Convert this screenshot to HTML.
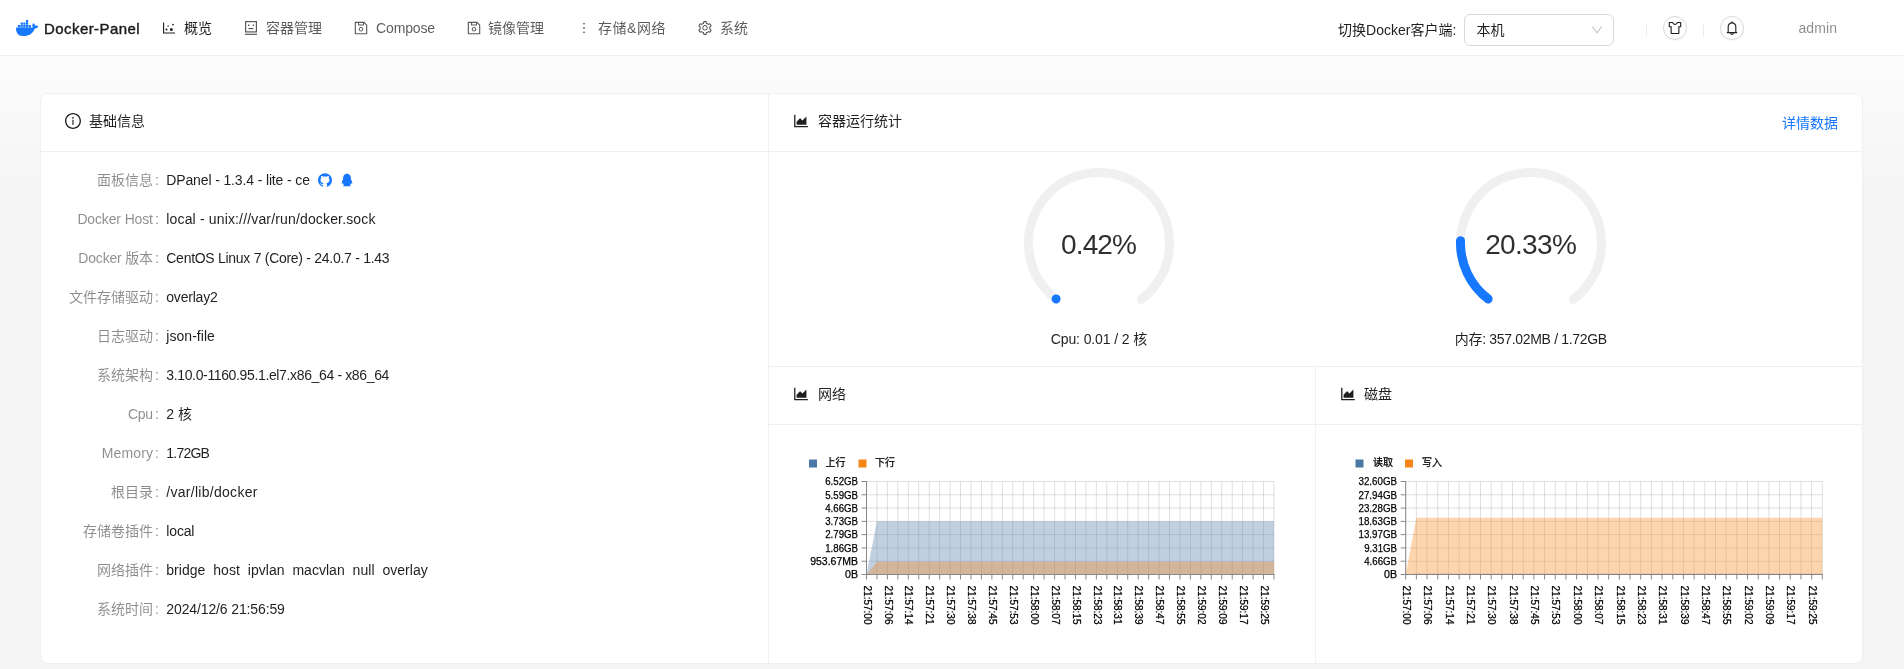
<!DOCTYPE html>
<html lang="zh-CN"><head><meta charset="utf-8"><title>Docker-Panel</title>
<style>
html,body{margin:0;padding:0}
body{width:1904px;height:669px;overflow:hidden;position:relative;background:linear-gradient(#ffffff,#f5f5f5 28%);font-family:"Liberation Sans","Noto Sans CJK SC",sans-serif;font-size:14px}
.hdr{position:absolute;left:0;top:0;width:1903px;height:55px;background:#fff;border-bottom:1px solid #f0f0f0}
.card{position:absolute;left:40px;top:93px;width:1821px;height:569px;background:#fff;border:1px solid #f0f0f0;border-radius:8px;box-sizing:content-box}
.hl{position:absolute;background:#f0f0f0;height:1px}
.vl{position:absolute;background:#f0f0f0;width:1px}
.sel{position:absolute;left:1464px;top:14px;width:148px;height:30px;border:1px solid #d9d9d9;border-radius:6px;background:#fff}
.circ{position:absolute;top:16px;width:22px;height:22px;border:1px solid #d9d9d9;border-radius:50%;background:#fff;box-shadow:0 2px 0 rgba(0,0,0,0.02)}
.dv{position:absolute;top:24px;width:1px;height:13px;background:#eeeeee}
svg text{font-family:"Liberation Sans","Noto Sans CJK SC",sans-serif;stroke:#000;stroke-width:0.25px}
</style></head><body>
<div class="hdr"></div>
<div class="card"></div>
<div class="hl" style="left:41px;top:151px;width:1821px"></div>
<div class="vl" style="left:768px;top:94px;height:569px"></div>
<div class="hl" style="left:769px;top:366px;width:1093px"></div>
<div class="hl" style="left:769px;top:424px;width:1093px"></div>
<div class="vl" style="left:1315px;top:367px;height:296px"></div>
<div class="sel"></div>
<div class="dv" style="left:1646px"></div><div class="dv" style="left:1703px"></div>
<div class="circ" style="left:1663px"></div><div class="circ" style="left:1720px"></div>
<svg style="position:absolute;left:16.400px;top:16.900px" width="22" height="22" viewBox="0 0 24 24" fill="#1677ff"><path d="M13.98 11.08h2.12a.19.19 0 0 0 .19-.19V9.01a.19.19 0 0 0-.19-.19h-2.12a.19.19 0 0 0-.19.19v1.88c0 .1.09.19.19.19m-2.95-5.43h2.12a.19.19 0 0 0 .18-.19V3.57a.19.19 0 0 0-.18-.18h-2.12a.18.18 0 0 0-.19.18v1.9c0 .1.09.18.19.18m0 2.71h2.12a.19.19 0 0 0 .18-.18V6.29a.19.19 0 0 0-.18-.18h-2.12a.18.18 0 0 0-.19.18v1.89c0 .1.09.18.19.18m-2.93 0h2.12a.19.19 0 0 0 .18-.18V6.29a.18.18 0 0 0-.18-.18H8.1a.18.18 0 0 0-.18.18v1.89c0 .1.08.18.18.18m-2.96 0h2.11a.19.19 0 0 0 .19-.18V6.29a.18.18 0 0 0-.19-.18H5.140a.19.19 0 0 0-.19.18v1.89c0 .1.080.18.190.18m5.890 2.720h2.120a.19.19 0 0 0 .18-.19V9.010a.19.19 0 0 0-.18-.19h-2.120a.18.18 0 0 0-.19.180v1.890c0 .1.090.190.190.190m-2.930 0h2.120a.18.18 0 0 0 .18-.19V9.010a.18.18 0 0 0-.18-.19H8.100a.18.18 0 0 0-.18.180v1.890c0 .1.080.190.180.190m-2.960 0h2.110a.18.18 0 0 0 .19-.19V9.010a.18.18 0 0 0-.18-.19H5.140a.19.19 0 0 0-.19.190v1.880c0 .1.080.190.190.190m-2.920 0h2.120a.18.18 0 0 0 .18-.19V9.010a.18.18 0 0 0-.18-.19H2.220a.18.18 0 0 0-.19.180v1.890c0 .1.080.190.190.190m21.540-1.190c-.06-.05-.67-.51-1.950-.51-.34 0-.68.030-1.010.090-.25-1.700-1.650-2.530-1.720-2.560l-.34-.2-.23.330c-.28.440-.49.920-.61 1.430-.23.970-.09 1.880.4 2.660-.59.330-1.550.41-1.740.42H.75a.75.75 0 0 0-.75.750c-.03 1.400.21 2.790.69 4.110.55 1.440 1.370 2.510 2.440 3.160 1.190.73 3.140 1.150 5.340 1.150 1 0 1.990-.09 2.970-.27a12.300 12.300 0 0 0 3.880-1.410c1-.58 1.890-1.310 2.650-2.170 1.270-1.440 2.030-3.040 2.590-4.460h.23c1.400 0 2.260-.56 2.730-1.030.32-.3.560-.66.730-1.070l.1-.29z"/></svg><svg style="position:absolute;left:162px;top:21px" width="14" height="14" viewBox="64 64 896 896" fill="rgba(0,0,0,0.88)"><path d="M888 792H200V168c0-4.400-3.600-8-8-8h-56c-4.400 0-8 3.600-8 8v688c0 4.400 3.600 8 8 8h752c4.400 0 8-3.600 8-8v-56c0-4.400-3.600-8-8-8zM288 604a64 64 0 10128 0 64 64 0 10-128 0zm118-224a48 48 0 1096 0 48 48 0 10-96 0zm158 228a96 96 0 10192 0 96 96 0 10-192 0zm148-314a56 56 0 10112 0 56 56 0 10-112 0z"/></svg><svg style="position:absolute;left:243px;top:19px" width="16" height="18" viewBox="0 0 16 18" fill="none" stroke="rgba(0,0,0,0.65)" stroke-width="1.2"><rect x="2.600" y="2.600" width="10.800" height="10.300"/><path d="M2 15.3H14"/><path d="M5.500 9.600H10.500"/><path d="M5.700 5.400V7 M10.300 5.400V7" stroke-width="1.300"/></svg><svg style="position:absolute;left:354.2px;top:21px" width="14" height="14" viewBox="64 64 896 896" fill="rgba(0,0,0,0.65)"><path d="M893.300 293.300L730.700 130.700c-7.500-7.500-16.700-13-26.700-16V112H144c-17.700 0-32 14.300-32 32v736c0 17.700 14.300 32 32 32h736c17.700 0 32-14.300 32-32V338.500c0-17-6.700-33.200-18.700-45.200zM384 184h256v104H384V184zm456 656H184V184h136v136c0 17.700 14.300 32 32 32h320c17.700 0 32-14.300 32-32V205.800l136 136V840zM512 442c-79.500 0-144 64.500-144 144s64.500 144 144 144 144-64.500 144-144-64.500-144-144-144zm0 224c-44.200 0-80-35.800-80-80s35.800-80 80-80 80 35.800 80 80-35.800 80-80 80z"/></svg><svg style="position:absolute;left:467px;top:21px" width="14" height="14" viewBox="64 64 896 896" fill="rgba(0,0,0,0.65)"><path d="M893.300 293.300L730.700 130.700c-7.500-7.500-16.700-13-26.700-16V112H144c-17.700 0-32 14.300-32 32v736c0 17.700 14.300 32 32 32h736c17.700 0 32-14.300 32-32V338.500c0-17-6.700-33.200-18.700-45.200zM384 184h256v104H384V184zm456 656H184V184h136v136c0 17.700 14.300 32 32 32h320c17.700 0 32-14.300 32-32V205.800l136 136V840zM512 442c-79.500 0-144 64.500-144 144s64.500 144 144 144 144-64.500 144-144-64.500-144-144-144zm0 224c-44.200 0-80-35.800-80-80s35.800-80 80-80 80 35.800 80 80-35.800 80-80 80z"/></svg><svg style="position:absolute;left:576.8px;top:21px" width="14" height="14" viewBox="64 64 896 896" fill="rgba(0,0,0,0.65)"><path d="M456 231a56 56 0 10112 0 56 56 0 10-112 0zm0 280a56 56 0 10112 0 56 56 0 10-112 0zm0 280a56 56 0 10112 0 56 56 0 10-112 0z"/></svg><svg style="position:absolute;left:698px;top:21px" width="14" height="14" viewBox="64 64 896 896" fill="rgba(0,0,0,0.65)"><path d="M924.800 625.700l-65.500-56c3.100-19 4.700-38.400 4.700-57.800s-1.600-38.800-4.700-57.800l65.500-56a32.030 32.030 0 009.300-35.200l-.9-2.600a442.090 442.090 0 00-79.700-137.900l-1.800-2.100a32.120 32.120 0 00-35.100-9.500l-81.300 28.900c-30-24.600-63.500-44-99.700-57.600l-15.700-85a32.050 32.050 0 00-25.800-25.700l-2.700-.5c-52.100-9.400-106.900-9.400-159 0l-2.700.5a32.050 32.050 0 00-25.800 25.700l-15.800 85.400a351.860 351.860 0 00-99 57.400l-81.900-29.100a32 32 0 00-35.100 9.500l-1.800 2.100a446.020 446.020 0 00-79.700 137.900l-.9 2.600c-4.500 12.500-.8 26.500 9.300 35.200l66.300 56.600c-3.100 18.800-4.600 38-4.600 57.100 0 19.200 1.500 38.400 4.600 57.100L99 625.500a32.030 32.030 0 00-9.300 35.200l.9 2.600c18.100 50.400 44.900 96.900 79.700 137.900l1.800 2.100a32.120 32.120 0 0035.100 9.500l81.900-29.100c29.800 24.500 63.100 43.900 99 57.400l15.800 85.400a32.050 32.050 0 0025.800 25.700l2.700.5a449.400 449.400 0 00159 0l2.700-.5a32.050 32.050 0 0025.800-25.700l15.700-85a350 350 0 0099.700-57.600l81.300 28.900a32 32 0 0035.100-9.500l1.800-2.100c34.800-41.100 61.600-87.500 79.700-137.900l.9-2.600c4.500-12.300.8-26.300-9.300-35zM788.300 465.900c2.500 15.100 3.800 30.600 3.800 46.100s-1.300 31-3.800 46.100l-6.600 40.100 74.700 63.900a370.030 370.030 0 01-42.600 73.600L721 702.800l-31.400 25.800c-23.900 19.600-50.500 35-79.300 45.800l-38.100 14.300-17.900 97a377.500 377.500 0 01-85 0l-17.900-97.200-37.800-14.500c-28.500-10.800-55-26.200-78.700-45.700l-31.400-25.900-93.400 33.200c-17-22.900-31.200-47.600-42.600-73.600l75.500-64.500-6.500-40c-2.400-14.900-3.700-30.300-3.700-45.500 0-15.300 1.200-30.600 3.700-45.500l6.500-40-75.500-64.500c11.300-26.100 25.600-50.700 42.600-73.600l93.400 33.200 31.400-25.900c23.700-19.500 50.200-34.900 78.700-45.700l37.900-14.300 17.900-97.200c28.100-3.200 56.800-3.200 85 0l17.900 97 38.100 14.300c28.700 10.800 55.400 26.200 79.300 45.800l31.400 25.800 92.800-32.900c17 22.900 31.200 47.600 42.600 73.600L781.800 426l6.500 39.900zM512 326c-97.200 0-176 78.800-176 176s78.800 176 176 176 176-78.800 176-176-78.800-176-176-176zm79.200 255.200A111.600 111.600 0 01512 614c-29.900 0-58-11.700-79.200-32.800A111.600 111.600 0 01400 502c0-29.900 11.700-58 32.800-79.200C454 401.600 482.100 390 512 390c29.900 0 58 11.600 79.200 32.800A111.600 111.600 0 01624 502c0 29.900-11.700 58-32.800 79.200z"/></svg><svg style="position:absolute;left:1591px;top:24px" width="12" height="12" viewBox="64 64 896 896" fill="rgba(0,0,0,0.25)"><path d="M884 256h-75c-5.100 0-9.900 2.500-12.900 6.600L512 654.200 227.900 262.600c-3-4.100-7.800-6.600-12.900-6.600h-75c-6.500 0-10.300 7.400-6.500 12.700l352.600 486.100c12.800 17.600 39 17.600 51.700 0l352.600-486.100c3.900-5.300.1-12.700-6.400-12.700z"/></svg><svg style="position:absolute;left:1668px;top:21px" width="14" height="14" viewBox="64 64 896 896" fill="rgba(0,0,0,0.88)"><path d="M870 126H663.800c-17.400 0-32.900 11.900-37 29.300C614.300 208.100 567 246 512 246s-102.300-37.900-114.800-90.700a37.930 37.930 0 00-37-29.300H154a44 44 0 00-44 44v252a44 44 0 0044 44h75v388a44 44 0 0044 44h478a44 44 0 0044-44V466h75a44 44 0 0044-44V170a44 44 0 00-44-44zm-28 268H723v432H301V394H182V198h153.300c28.200 71.200 97.500 120 176.700 120s148.500-48.800 176.700-120H842v196z"/></svg><svg style="position:absolute;left:1725px;top:21px" width="14" height="14" viewBox="64 64 896 896" fill="rgba(0,0,0,0.88)"><path d="M816 768h-24V428c0-141.100-104.300-257.700-240-277.100V112c0-22.100-17.900-40-40-40s-40 17.900-40 40v38.900c-135.700 19.400-240 136-240 277.100v340h-24c-17.700 0-32 14.300-32 32v32c0 4.400 3.600 8 8 8h216c0 61.800 50.200 112 112 112s112-50.200 112-112h216c4.400 0 8-3.600 8-8v-32c0-17.700-14.300-32-32-32zM512 888c-26.500 0-48-21.500-48-48h96c0 26.500-21.500 48-48 48zM304 768V428c0-55.600 21.600-107.800 60.900-147.100S456.400 220 512 220c55.600 0 107.800 21.600 147.100 60.900S720 372.400 720 428v340H304z"/></svg><svg style="position:absolute;left:65px;top:113px" width="16" height="16" viewBox="64 64 896 896" fill="rgba(0,0,0,0.88)"><path d="M512 64C264.6 64 64 264.6 64 512s200.6 448 448 448 448-200.6 448-448S759.4 64 512 64zm0 820c-205.4 0-372-166.6-372-372s166.6-372 372-372 372 166.6 372 372-166.6 372-372 372z"/><path d="M464 336a48 48 0 1096 0 48 48 0 10-96 0zm72 112h-48c-4.400 0-8 3.600-8 8v272c0 4.400 3.600 8 8 8h48c4.400 0 8-3.600 8-8V456c0-4.400-3.600-8-8-8z"/></svg><svg style="position:absolute;left:793px;top:113px" width="16" height="16" viewBox="64 64 896 896" fill="rgba(0,0,0,0.88)"><path d="M888 792H200V168c0-4.400-3.600-8-8-8h-56c-4.400 0-8 3.600-8 8v688c0 4.400 3.600 8 8 8h752c4.400 0 8-3.600 8-8v-56c0-4.400-3.600-8-8-8zm-616-64h536c4.400 0 8-3.600 8-8V284c0-7.200-8.700-10.700-13.700-5.700L592 488.600l-125.400-124a8.030 8.030 0 00-11.300 0l-189 189.600a7.870 7.870 0 00-2.300 5.600V720c0 4.400 3.600 8 8 8z"/></svg><svg style="position:absolute;left:793px;top:386px" width="16" height="16" viewBox="64 64 896 896" fill="rgba(0,0,0,0.88)"><path d="M888 792H200V168c0-4.400-3.600-8-8-8h-56c-4.400 0-8 3.600-8 8v688c0 4.400 3.600 8 8 8h752c4.400 0 8-3.600 8-8v-56c0-4.400-3.600-8-8-8zm-616-64h536c4.400 0 8-3.600 8-8V284c0-7.200-8.700-10.700-13.700-5.700L592 488.600l-125.400-124a8.030 8.030 0 00-11.300 0l-189 189.600a7.870 7.870 0 00-2.300 5.600V720c0 4.400 3.600 8 8 8z"/></svg><svg style="position:absolute;left:1340px;top:386px" width="16" height="16" viewBox="64 64 896 896" fill="rgba(0,0,0,0.88)"><path d="M888 792H200V168c0-4.400-3.600-8-8-8h-56c-4.400 0-8 3.600-8 8v688c0 4.400 3.600 8 8 8h752c4.400 0 8-3.600 8-8v-56c0-4.400-3.600-8-8-8zm-616-64h536c4.400 0 8-3.600 8-8V284c0-7.200-8.700-10.700-13.700-5.700L592 488.600l-125.400-124a8.030 8.030 0 00-11.300 0l-189 189.600a7.870 7.870 0 00-2.300 5.600V720c0 4.400 3.600 8 8 8z"/></svg><svg style="position:absolute;left:318px;top:173px" width="14" height="14" viewBox="64 64 896 896" fill="#1677ff"><path d="M511.600 76.300C264.300 76.200 64 276.400 64 523.500 64 718.900 189.300 885 363.800 946c23.500 5.900 19.900-10.800 19.900-22.200v-77.500c-135.700 15.900-141.200-73.900-150.300-88.900C215 726 171.500 718 184.500 703c30.900-15.900 62.400 4 98.900 57.900 26.400 39.100 77.900 32.500 104 26 5.700-23.500 17.900-44.500 34.700-60.800-140.600-25.200-199.200-111-199.200-213 0-49.500 16.300-95 48.300-131.700-20.400-60.500 1.900-112.300 4.900-120 58.100-5.200 118.500 41.600 123.200 45.300 33-8.900 70.700-13.600 112.900-13.600 42.400 0 80.200 4.900 113.500 13.900 11.300-8.600 67.300-48.800 121.300-43.900 2.900 7.700 24.700 58.300 5.500 118 32.400 36.800 48.900 82.700 48.900 132.300 0 102.200-59 188.100-200 212.900a127.500 127.500 0 0138.100 91v112.500c.8 9 0 17.900 15 17.900 177.100-59.700 304.600-227 304.600-424.100 0-247.200-200.400-447.300-447.500-447.300z"/></svg><svg style="position:absolute;left:340px;top:173px" width="14" height="14" viewBox="64 64 896 896" fill="#1677ff"><path d="M824.800 613.200c-16-51.400-34.400-94.600-62.700-165.300C766.500 262.200 689.300 112 511.500 112 331.700 112 256.200 265.200 261 447.900c-28.400 70.800-46.700 113.700-62.700 165.300-34 109.500-23 154.800-14.600 155.800 18 2.200 70.100-82.400 70.100-82.400 0 49 25.200 112.900 79.800 159-26.400 8.100-85.700 29.900-71.600 53.800 11.400 19.300 196.200 12.300 249.500 6.300 53.300 6 238.100 13 249.500-6.300 14.100-23.800-45.300-45.700-71.600-53.800 54.600-46.200 79.800-110.100 79.800-159 0 0 52.100 84.600 70.100 82.400 8.500-1.100 19.500-46.400-14.500-155.800z"/></svg>
<svg style="position:absolute;left:1024px;top:168px" width="150" height="150" viewBox="0 0 150 150"><circle cx="75" cy="75" r="70.5" fill="none" stroke="#f0f0f0" stroke-width="9" stroke-linecap="round" stroke-dasharray="350.68 442.96" transform="rotate(127.5 75 75)"/><circle cx="75" cy="75" r="70.5" fill="none" stroke="#1677ff" stroke-width="9" stroke-linecap="round" stroke-dasharray="0.01 442.96" transform="rotate(127.5 75 75)"/></svg>
<svg style="position:absolute;left:1456px;top:168px" width="150" height="150" viewBox="0 0 150 150"><circle cx="75" cy="75" r="70.5" fill="none" stroke="#f0f0f0" stroke-width="9" stroke-linecap="round" stroke-dasharray="350.68 442.96" transform="rotate(127.5 75 75)"/><circle cx="75" cy="75" r="70.5" fill="none" stroke="#1677ff" stroke-width="9" stroke-linecap="round" stroke-dasharray="66.79 442.96" transform="rotate(127.5 75 75)"/></svg>
<svg style="position:absolute;left:0;top:0;will-change:transform" width="1904" height="669" viewBox="0 0 1904 669"><rect x="809" y="459.5" width="8" height="8" fill="#4c78a8"/><rect x="858.5" y="459.5" width="8" height="8" fill="#f58518"/><text x="825.5" y="466.3" font-size="10" fill="#000">上行</text><text x="875" y="466.3" font-size="10" fill="#000">下行</text><path d="M866.50 481.5 V574.5 M876.95 481.5 V574.5 M887.40 481.5 V574.5 M897.85 481.5 V574.5 M908.29 481.5 V574.5 M918.74 481.5 V574.5 M929.19 481.5 V574.5 M939.64 481.5 V574.5 M950.09 481.5 V574.5 M960.54 481.5 V574.5 M970.99 481.5 V574.5 M981.44 481.5 V574.5 M991.88 481.5 V574.5 M1002.33 481.5 V574.5 M1012.78 481.5 V574.5 M1023.23 481.5 V574.5 M1033.68 481.5 V574.5 M1044.13 481.5 V574.5 M1054.58 481.5 V574.5 M1065.03 481.5 V574.5 M1075.47 481.5 V574.5 M1085.92 481.5 V574.5 M1096.37 481.5 V574.5 M1106.82 481.5 V574.5 M1117.27 481.5 V574.5 M1127.72 481.5 V574.5 M1138.17 481.5 V574.5 M1148.62 481.5 V574.5 M1159.06 481.5 V574.5 M1169.51 481.5 V574.5 M1179.96 481.5 V574.5 M1190.41 481.5 V574.5 M1200.86 481.5 V574.5 M1211.31 481.5 V574.5 M1221.76 481.5 V574.5 M1232.21 481.5 V574.5 M1242.65 481.5 V574.5 M1253.10 481.5 V574.5 M1263.55 481.5 V574.5 M1274.00 481.5 V574.5 M866.5 481.50 H1274 M866.5 494.79 H1274 M866.5 508.07 H1274 M866.5 521.36 H1274 M866.5 534.64 H1274 M866.5 547.93 H1274 M866.5 561.21 H1274 M866.5 574.50 H1274 " stroke="#000" stroke-opacity="0.125" stroke-width="1" fill="none"/><path d="M866.5 574.5 L876.95 521.3 H1274 V574.5 Z" fill="#4c78a8" fill-opacity="0.35"/><path d="M866.5 574.5 L876.95 561.8 H1274 V574.5 Z" fill="#f58518" fill-opacity="0.35"/><path d="M866.5 481 V575 M866.5 574.5 H1274.5 M866.50 574.5 V579.5 M876.95 574.5 V579.5 M887.40 574.5 V579.5 M897.85 574.5 V579.5 M908.29 574.5 V579.5 M918.74 574.5 V579.5 M929.19 574.5 V579.5 M939.64 574.5 V579.5 M950.09 574.5 V579.5 M960.54 574.5 V579.5 M970.99 574.5 V579.5 M981.44 574.5 V579.5 M991.88 574.5 V579.5 M1002.33 574.5 V579.5 M1012.78 574.5 V579.5 M1023.23 574.5 V579.5 M1033.68 574.5 V579.5 M1044.13 574.5 V579.5 M1054.58 574.5 V579.5 M1065.03 574.5 V579.5 M1075.47 574.5 V579.5 M1085.92 574.5 V579.5 M1096.37 574.5 V579.5 M1106.82 574.5 V579.5 M1117.27 574.5 V579.5 M1127.72 574.5 V579.5 M1138.17 574.5 V579.5 M1148.62 574.5 V579.5 M1159.06 574.5 V579.5 M1169.51 574.5 V579.5 M1179.96 574.5 V579.5 M1190.41 574.5 V579.5 M1200.86 574.5 V579.5 M1211.31 574.5 V579.5 M1221.76 574.5 V579.5 M1232.21 574.5 V579.5 M1242.65 574.5 V579.5 M1253.10 574.5 V579.5 M1263.55 574.5 V579.5 M1274.00 574.5 V579.5 M861.5 481.50 H866.5 M861.5 494.79 H866.5 M861.5 508.07 H866.5 M861.5 521.36 H866.5 M861.5 534.64 H866.5 M861.5 547.93 H866.5 M861.5 561.21 H866.5 M861.5 574.50 H866.5 " stroke="#888" stroke-width="1" fill="none"/><text x="858" y="485.30" font-size="10.5" text-anchor="end" fill="#000" textLength="32.8" lengthAdjust="spacingAndGlyphs">6.52GB</text><text x="858" y="498.59" font-size="10.5" text-anchor="end" fill="#000" textLength="32.8" lengthAdjust="spacingAndGlyphs">5.59GB</text><text x="858" y="511.87" font-size="10.5" text-anchor="end" fill="#000" textLength="32.8" lengthAdjust="spacingAndGlyphs">4.66GB</text><text x="858" y="525.16" font-size="10.5" text-anchor="end" fill="#000" textLength="32.8" lengthAdjust="spacingAndGlyphs">3.73GB</text><text x="858" y="538.44" font-size="10.5" text-anchor="end" fill="#000" textLength="32.8" lengthAdjust="spacingAndGlyphs">2.79GB</text><text x="858" y="551.73" font-size="10.5" text-anchor="end" fill="#000" textLength="32.8" lengthAdjust="spacingAndGlyphs">1.86GB</text><text x="858" y="565.01" font-size="10.5" text-anchor="end" fill="#000" textLength="47.8" lengthAdjust="spacingAndGlyphs">953.67MB</text><text x="858" y="578.30" font-size="10.5" text-anchor="end" fill="#000" textLength="13" lengthAdjust="spacingAndGlyphs">0B</text><text transform="translate(866.50 585.5) rotate(90)" x="0" y="2.8" font-size="10.5" fill="#000" textLength="39" lengthAdjust="spacingAndGlyphs">21:57:00</text><text transform="translate(887.40 585.5) rotate(90)" x="0" y="2.8" font-size="10.5" fill="#000" textLength="39" lengthAdjust="spacingAndGlyphs">21:57:06</text><text transform="translate(908.29 585.5) rotate(90)" x="0" y="2.8" font-size="10.5" fill="#000" textLength="39" lengthAdjust="spacingAndGlyphs">21:57:14</text><text transform="translate(929.19 585.5) rotate(90)" x="0" y="2.8" font-size="10.5" fill="#000" textLength="39" lengthAdjust="spacingAndGlyphs">21:57:21</text><text transform="translate(950.09 585.5) rotate(90)" x="0" y="2.8" font-size="10.5" fill="#000" textLength="39" lengthAdjust="spacingAndGlyphs">21:57:30</text><text transform="translate(970.99 585.5) rotate(90)" x="0" y="2.8" font-size="10.5" fill="#000" textLength="39" lengthAdjust="spacingAndGlyphs">21:57:38</text><text transform="translate(991.88 585.5) rotate(90)" x="0" y="2.8" font-size="10.5" fill="#000" textLength="39" lengthAdjust="spacingAndGlyphs">21:57:45</text><text transform="translate(1012.78 585.5) rotate(90)" x="0" y="2.8" font-size="10.5" fill="#000" textLength="39" lengthAdjust="spacingAndGlyphs">21:57:53</text><text transform="translate(1033.68 585.5) rotate(90)" x="0" y="2.8" font-size="10.5" fill="#000" textLength="39" lengthAdjust="spacingAndGlyphs">21:58:00</text><text transform="translate(1054.58 585.5) rotate(90)" x="0" y="2.8" font-size="10.5" fill="#000" textLength="39" lengthAdjust="spacingAndGlyphs">21:58:07</text><text transform="translate(1075.47 585.5) rotate(90)" x="0" y="2.8" font-size="10.5" fill="#000" textLength="39" lengthAdjust="spacingAndGlyphs">21:58:15</text><text transform="translate(1096.37 585.5) rotate(90)" x="0" y="2.8" font-size="10.5" fill="#000" textLength="39" lengthAdjust="spacingAndGlyphs">21:58:23</text><text transform="translate(1117.27 585.5) rotate(90)" x="0" y="2.8" font-size="10.5" fill="#000" textLength="39" lengthAdjust="spacingAndGlyphs">21:58:31</text><text transform="translate(1138.17 585.5) rotate(90)" x="0" y="2.8" font-size="10.5" fill="#000" textLength="39" lengthAdjust="spacingAndGlyphs">21:58:39</text><text transform="translate(1159.06 585.5) rotate(90)" x="0" y="2.8" font-size="10.5" fill="#000" textLength="39" lengthAdjust="spacingAndGlyphs">21:58:47</text><text transform="translate(1179.96 585.5) rotate(90)" x="0" y="2.8" font-size="10.5" fill="#000" textLength="39" lengthAdjust="spacingAndGlyphs">21:58:55</text><text transform="translate(1200.86 585.5) rotate(90)" x="0" y="2.8" font-size="10.5" fill="#000" textLength="39" lengthAdjust="spacingAndGlyphs">21:59:02</text><text transform="translate(1221.76 585.5) rotate(90)" x="0" y="2.8" font-size="10.5" fill="#000" textLength="39" lengthAdjust="spacingAndGlyphs">21:59:09</text><text transform="translate(1242.65 585.5) rotate(90)" x="0" y="2.8" font-size="10.5" fill="#000" textLength="39" lengthAdjust="spacingAndGlyphs">21:59:17</text><text transform="translate(1263.55 585.5) rotate(90)" x="0" y="2.8" font-size="10.5" fill="#000" textLength="39" lengthAdjust="spacingAndGlyphs">21:59:25</text><rect x="1355.5" y="459.5" width="8" height="8" fill="#4c78a8"/><rect x="1405" y="459.5" width="8" height="8" fill="#f58518"/><text x="1373" y="466.3" font-size="10" fill="#000">读取</text><text x="1422" y="466.3" font-size="10" fill="#000">写入</text><path d="M1405.70 481.5 V574.5 M1416.38 481.5 V574.5 M1427.06 481.5 V574.5 M1437.75 481.5 V574.5 M1448.43 481.5 V574.5 M1459.11 481.5 V574.5 M1469.79 481.5 V574.5 M1480.47 481.5 V574.5 M1491.16 481.5 V574.5 M1501.84 481.5 V574.5 M1512.52 481.5 V574.5 M1523.20 481.5 V574.5 M1533.88 481.5 V574.5 M1544.57 481.5 V574.5 M1555.25 481.5 V574.5 M1565.93 481.5 V574.5 M1576.61 481.5 V574.5 M1587.29 481.5 V574.5 M1597.98 481.5 V574.5 M1608.66 481.5 V574.5 M1619.34 481.5 V574.5 M1630.02 481.5 V574.5 M1640.71 481.5 V574.5 M1651.39 481.5 V574.5 M1662.07 481.5 V574.5 M1672.75 481.5 V574.5 M1683.43 481.5 V574.5 M1694.12 481.5 V574.5 M1704.80 481.5 V574.5 M1715.48 481.5 V574.5 M1726.16 481.5 V574.5 M1736.84 481.5 V574.5 M1747.53 481.5 V574.5 M1758.21 481.5 V574.5 M1768.89 481.5 V574.5 M1779.57 481.5 V574.5 M1790.25 481.5 V574.5 M1800.94 481.5 V574.5 M1811.62 481.5 V574.5 M1822.30 481.5 V574.5 M1405.7 481.50 H1822.3 M1405.7 494.79 H1822.3 M1405.7 508.07 H1822.3 M1405.7 521.36 H1822.3 M1405.7 534.64 H1822.3 M1405.7 547.93 H1822.3 M1405.7 561.21 H1822.3 M1405.7 574.50 H1822.3 " stroke="#000" stroke-opacity="0.125" stroke-width="1" fill="none"/><path d="M1405.7 574.5 L1416.38 573.5 H1822.3 V574.5 Z" fill="#4c78a8" fill-opacity="0.35"/><path d="M1405.7 574.5 L1416.38 517.8 H1822.3 V574.5 Z" fill="#f58518" fill-opacity="0.35"/><path d="M1405.7 481 V575 M1405.7 574.5 H1822.8 M1405.70 574.5 V579.5 M1416.38 574.5 V579.5 M1427.06 574.5 V579.5 M1437.75 574.5 V579.5 M1448.43 574.5 V579.5 M1459.11 574.5 V579.5 M1469.79 574.5 V579.5 M1480.47 574.5 V579.5 M1491.16 574.5 V579.5 M1501.84 574.5 V579.5 M1512.52 574.5 V579.5 M1523.20 574.5 V579.5 M1533.88 574.5 V579.5 M1544.57 574.5 V579.5 M1555.25 574.5 V579.5 M1565.93 574.5 V579.5 M1576.61 574.5 V579.5 M1587.29 574.5 V579.5 M1597.98 574.5 V579.5 M1608.66 574.5 V579.5 M1619.34 574.5 V579.5 M1630.02 574.5 V579.5 M1640.71 574.5 V579.5 M1651.39 574.5 V579.5 M1662.07 574.5 V579.5 M1672.75 574.5 V579.5 M1683.43 574.5 V579.5 M1694.12 574.5 V579.5 M1704.80 574.5 V579.5 M1715.48 574.5 V579.5 M1726.16 574.5 V579.5 M1736.84 574.5 V579.5 M1747.53 574.5 V579.5 M1758.21 574.5 V579.5 M1768.89 574.5 V579.5 M1779.57 574.5 V579.5 M1790.25 574.5 V579.5 M1800.94 574.5 V579.5 M1811.62 574.5 V579.5 M1822.30 574.5 V579.5 M1400.7 481.50 H1405.7 M1400.7 494.79 H1405.7 M1400.7 508.07 H1405.7 M1400.7 521.36 H1405.7 M1400.7 534.64 H1405.7 M1400.7 547.93 H1405.7 M1400.7 561.21 H1405.7 M1400.7 574.50 H1405.7 " stroke="#888" stroke-width="1" fill="none"/><text x="1397" y="485.30" font-size="10.5" text-anchor="end" fill="#000" textLength="38.5" lengthAdjust="spacingAndGlyphs">32.60GB</text><text x="1397" y="498.59" font-size="10.5" text-anchor="end" fill="#000" textLength="38.5" lengthAdjust="spacingAndGlyphs">27.94GB</text><text x="1397" y="511.87" font-size="10.5" text-anchor="end" fill="#000" textLength="38.5" lengthAdjust="spacingAndGlyphs">23.28GB</text><text x="1397" y="525.16" font-size="10.5" text-anchor="end" fill="#000" textLength="38.5" lengthAdjust="spacingAndGlyphs">18.63GB</text><text x="1397" y="538.44" font-size="10.5" text-anchor="end" fill="#000" textLength="38.5" lengthAdjust="spacingAndGlyphs">13.97GB</text><text x="1397" y="551.73" font-size="10.5" text-anchor="end" fill="#000" textLength="32.8" lengthAdjust="spacingAndGlyphs">9.31GB</text><text x="1397" y="565.01" font-size="10.5" text-anchor="end" fill="#000" textLength="32.8" lengthAdjust="spacingAndGlyphs">4.66GB</text><text x="1397" y="578.30" font-size="10.5" text-anchor="end" fill="#000" textLength="13" lengthAdjust="spacingAndGlyphs">0B</text><text transform="translate(1405.70 585.5) rotate(90)" x="0" y="2.8" font-size="10.5" fill="#000" textLength="39" lengthAdjust="spacingAndGlyphs">21:57:00</text><text transform="translate(1427.06 585.5) rotate(90)" x="0" y="2.8" font-size="10.5" fill="#000" textLength="39" lengthAdjust="spacingAndGlyphs">21:57:06</text><text transform="translate(1448.43 585.5) rotate(90)" x="0" y="2.8" font-size="10.5" fill="#000" textLength="39" lengthAdjust="spacingAndGlyphs">21:57:14</text><text transform="translate(1469.79 585.5) rotate(90)" x="0" y="2.8" font-size="10.5" fill="#000" textLength="39" lengthAdjust="spacingAndGlyphs">21:57:21</text><text transform="translate(1491.16 585.5) rotate(90)" x="0" y="2.8" font-size="10.5" fill="#000" textLength="39" lengthAdjust="spacingAndGlyphs">21:57:30</text><text transform="translate(1512.52 585.5) rotate(90)" x="0" y="2.8" font-size="10.5" fill="#000" textLength="39" lengthAdjust="spacingAndGlyphs">21:57:38</text><text transform="translate(1533.88 585.5) rotate(90)" x="0" y="2.8" font-size="10.5" fill="#000" textLength="39" lengthAdjust="spacingAndGlyphs">21:57:45</text><text transform="translate(1555.25 585.5) rotate(90)" x="0" y="2.8" font-size="10.5" fill="#000" textLength="39" lengthAdjust="spacingAndGlyphs">21:57:53</text><text transform="translate(1576.61 585.5) rotate(90)" x="0" y="2.8" font-size="10.5" fill="#000" textLength="39" lengthAdjust="spacingAndGlyphs">21:58:00</text><text transform="translate(1597.98 585.5) rotate(90)" x="0" y="2.8" font-size="10.5" fill="#000" textLength="39" lengthAdjust="spacingAndGlyphs">21:58:07</text><text transform="translate(1619.34 585.5) rotate(90)" x="0" y="2.8" font-size="10.5" fill="#000" textLength="39" lengthAdjust="spacingAndGlyphs">21:58:15</text><text transform="translate(1640.71 585.5) rotate(90)" x="0" y="2.8" font-size="10.5" fill="#000" textLength="39" lengthAdjust="spacingAndGlyphs">21:58:23</text><text transform="translate(1662.07 585.5) rotate(90)" x="0" y="2.8" font-size="10.5" fill="#000" textLength="39" lengthAdjust="spacingAndGlyphs">21:58:31</text><text transform="translate(1683.43 585.5) rotate(90)" x="0" y="2.8" font-size="10.5" fill="#000" textLength="39" lengthAdjust="spacingAndGlyphs">21:58:39</text><text transform="translate(1704.80 585.5) rotate(90)" x="0" y="2.8" font-size="10.5" fill="#000" textLength="39" lengthAdjust="spacingAndGlyphs">21:58:47</text><text transform="translate(1726.16 585.5) rotate(90)" x="0" y="2.8" font-size="10.5" fill="#000" textLength="39" lengthAdjust="spacingAndGlyphs">21:58:55</text><text transform="translate(1747.53 585.5) rotate(90)" x="0" y="2.8" font-size="10.5" fill="#000" textLength="39" lengthAdjust="spacingAndGlyphs">21:59:02</text><text transform="translate(1768.89 585.5) rotate(90)" x="0" y="2.8" font-size="10.5" fill="#000" textLength="39" lengthAdjust="spacingAndGlyphs">21:59:09</text><text transform="translate(1790.25 585.5) rotate(90)" x="0" y="2.8" font-size="10.5" fill="#000" textLength="39" lengthAdjust="spacingAndGlyphs">21:59:17</text><text transform="translate(1811.62 585.5) rotate(90)" x="0" y="2.8" font-size="10.5" fill="#000" textLength="39" lengthAdjust="spacingAndGlyphs">21:59:25</text></svg>
<div id="tx" style="position:absolute;left:0;top:0;width:1904px;height:669px;will-change:transform">
<span id="t0" style="position:absolute;white-space:nowrap;font-size:15px;line-height:23px;top:17.3px;color:rgba(0,0,0,0.88);-webkit-text-stroke:0.4px rgba(0,0,0,0.88);letter-spacing:0.427px;left:44px;">Docker-Panel</span>
<span id="t1" style="position:absolute;white-space:nowrap;font-size:14px;line-height:22px;top:17px;color:rgba(0,0,0,0.88);left:184px;">概览</span>
<span id="t2" style="position:absolute;white-space:nowrap;font-size:14px;line-height:22px;top:17px;color:rgba(0,0,0,0.65);left:266px;">容器管理</span>
<span id="t3" style="position:absolute;white-space:nowrap;font-size:14px;line-height:22px;top:17px;color:rgba(0,0,0,0.65);letter-spacing:-0.132px;left:376px;">Compose</span>
<span id="t4" style="position:absolute;white-space:nowrap;font-size:14px;line-height:22px;top:17px;color:rgba(0,0,0,0.65);left:488px;">镜像管理</span>
<span id="t5" style="position:absolute;white-space:nowrap;font-size:14px;line-height:22px;top:17px;color:rgba(0,0,0,0.65);letter-spacing:0.531px;left:598px;">存储&amp;网络</span>
<span id="t6" style="position:absolute;white-space:nowrap;font-size:14px;line-height:22px;top:17px;color:rgba(0,0,0,0.65);left:720px;">系统</span>
<span id="t7" style="position:absolute;white-space:nowrap;font-size:14px;line-height:22px;top:19px;color:rgba(0,0,0,0.88);letter-spacing:0.022px;left:1338px;">切换Docker客户端:</span>
<span id="t8" style="position:absolute;white-space:nowrap;font-size:14px;line-height:22px;top:19px;color:rgba(0,0,0,0.88);left:1476.5px;">本机</span>
<span id="t9" style="position:absolute;white-space:nowrap;font-size:14px;line-height:22px;top:17px;color:rgba(0,0,0,0.45);letter-spacing:0.072px;left:1798.5px;">admin</span>
<span id="t10" style="position:absolute;white-space:nowrap;font-size:14px;line-height:22px;top:110px;color:rgba(0,0,0,0.88);left:89px;">基础信息</span>
<span id="t11" style="position:absolute;white-space:nowrap;font-size:14px;line-height:22px;top:110px;color:rgba(0,0,0,0.88);left:818px;">容器运行统计</span>
<span id="t12" style="position:absolute;white-space:nowrap;font-size:14px;line-height:22px;top:112px;color:#1677ff;left:1782px;">详情数据</span>
<span id="t13" style="position:absolute;white-space:nowrap;font-size:14px;line-height:22px;top:383px;color:rgba(0,0,0,0.88);left:818px;">网络</span>
<span id="t14" style="position:absolute;white-space:nowrap;font-size:14px;line-height:22px;top:383px;color:rgba(0,0,0,0.88);left:1364px;">磁盘</span>
<span id="t15" style="position:absolute;white-space:nowrap;font-size:14px;line-height:22px;top:169px;color:rgba(0,0,0,0.45);right:1751px;">面板信息</span>
<span id="t16" style="position:absolute;white-space:nowrap;font-size:14px;line-height:22px;top:169px;color:rgba(0,0,0,0.45);left:155px;">:</span>
<span id="t17" style="position:absolute;white-space:nowrap;font-size:14px;line-height:22px;top:169px;color:rgba(0,0,0,0.88);letter-spacing:-0.137px;left:166.3px;">DPanel - 1.3.4 - lite - ce</span>
<span id="t18" style="position:absolute;white-space:nowrap;font-size:14px;line-height:22px;top:208px;color:rgba(0,0,0,0.45);letter-spacing:-0.139px;right:1751.14px;">Docker Host</span>
<span id="t19" style="position:absolute;white-space:nowrap;font-size:14px;line-height:22px;top:208px;color:rgba(0,0,0,0.45);left:155px;">:</span>
<span id="t20" style="position:absolute;white-space:nowrap;font-size:14px;line-height:22px;top:208px;color:rgba(0,0,0,0.88);letter-spacing:0.155px;left:166.3px;">local - unix:///var/run/docker.sock</span>
<span id="t21" style="position:absolute;white-space:nowrap;font-size:14px;line-height:22px;top:247px;color:rgba(0,0,0,0.45);letter-spacing:-0.193px;right:1751.19px;">Docker 版本</span>
<span id="t22" style="position:absolute;white-space:nowrap;font-size:14px;line-height:22px;top:247px;color:rgba(0,0,0,0.45);left:155px;">:</span>
<span id="t23" style="position:absolute;white-space:nowrap;font-size:14px;line-height:22px;top:247px;color:rgba(0,0,0,0.88);letter-spacing:-0.283px;left:166.3px;">CentOS Linux 7 (Core) - 24.0.7 - 1.43</span>
<span id="t24" style="position:absolute;white-space:nowrap;font-size:14px;line-height:22px;top:286px;color:rgba(0,0,0,0.45);right:1751px;">文件存储驱动</span>
<span id="t25" style="position:absolute;white-space:nowrap;font-size:14px;line-height:22px;top:286px;color:rgba(0,0,0,0.45);left:155px;">:</span>
<span id="t26" style="position:absolute;white-space:nowrap;font-size:14px;line-height:22px;top:286px;color:rgba(0,0,0,0.88);letter-spacing:-0.215px;left:166.3px;">overlay2</span>
<span id="t27" style="position:absolute;white-space:nowrap;font-size:14px;line-height:22px;top:325px;color:rgba(0,0,0,0.45);right:1751px;">日志驱动</span>
<span id="t28" style="position:absolute;white-space:nowrap;font-size:14px;line-height:22px;top:325px;color:rgba(0,0,0,0.45);left:155px;">:</span>
<span id="t29" style="position:absolute;white-space:nowrap;font-size:14px;line-height:22px;top:325px;color:rgba(0,0,0,0.88);letter-spacing:0.039px;left:166.3px;">json-file</span>
<span id="t30" style="position:absolute;white-space:nowrap;font-size:14px;line-height:22px;top:364px;color:rgba(0,0,0,0.45);right:1751px;">系统架构</span>
<span id="t31" style="position:absolute;white-space:nowrap;font-size:14px;line-height:22px;top:364px;color:rgba(0,0,0,0.45);left:155px;">:</span>
<span id="t32" style="position:absolute;white-space:nowrap;font-size:14px;line-height:22px;top:364px;color:rgba(0,0,0,0.88);letter-spacing:-0.358px;left:166.3px;">3.10.0-1160.95.1.el7.x86_64 - x86_64</span>
<span id="t33" style="position:absolute;white-space:nowrap;font-size:14px;line-height:22px;top:403px;color:rgba(0,0,0,0.45);letter-spacing:-0.396px;right:1751.4px;">Cpu</span>
<span id="t34" style="position:absolute;white-space:nowrap;font-size:14px;line-height:22px;top:403px;color:rgba(0,0,0,0.45);left:155px;">:</span>
<span id="t35" style="position:absolute;white-space:nowrap;font-size:14px;line-height:22px;top:403px;color:rgba(0,0,0,0.88);letter-spacing:0.038px;left:166.3px;">2 核</span>
<span id="t36" style="position:absolute;white-space:nowrap;font-size:14px;line-height:22px;top:442px;color:rgba(0,0,0,0.45);letter-spacing:0.123px;right:1750.88px;">Memory</span>
<span id="t37" style="position:absolute;white-space:nowrap;font-size:14px;line-height:22px;top:442px;color:rgba(0,0,0,0.45);left:155px;">:</span>
<span id="t38" style="position:absolute;white-space:nowrap;font-size:14px;line-height:22px;top:442px;color:rgba(0,0,0,0.88);letter-spacing:-0.764px;left:166.3px;">1.72GB</span>
<span id="t39" style="position:absolute;white-space:nowrap;font-size:14px;line-height:22px;top:481px;color:rgba(0,0,0,0.45);right:1751px;">根目录</span>
<span id="t40" style="position:absolute;white-space:nowrap;font-size:14px;line-height:22px;top:481px;color:rgba(0,0,0,0.45);left:155px;">:</span>
<span id="t41" style="position:absolute;white-space:nowrap;font-size:14px;line-height:22px;top:481px;color:rgba(0,0,0,0.88);letter-spacing:0.283px;left:166.3px;">/var/lib/docker</span>
<span id="t42" style="position:absolute;white-space:nowrap;font-size:14px;line-height:22px;top:520px;color:rgba(0,0,0,0.45);right:1751px;">存储卷插件</span>
<span id="t43" style="position:absolute;white-space:nowrap;font-size:14px;line-height:22px;top:520px;color:rgba(0,0,0,0.45);left:155px;">:</span>
<span id="t44" style="position:absolute;white-space:nowrap;font-size:14px;line-height:22px;top:520px;color:rgba(0,0,0,0.88);letter-spacing:-0.159px;left:166.3px;">local</span>
<span id="t45" style="position:absolute;white-space:nowrap;font-size:14px;line-height:22px;top:559px;color:rgba(0,0,0,0.45);right:1751px;">网络插件</span>
<span id="t46" style="position:absolute;white-space:nowrap;font-size:14px;line-height:22px;top:559px;color:rgba(0,0,0,0.45);left:155px;">:</span>
<span id="t47" style="position:absolute;white-space:nowrap;font-size:14px;line-height:22px;top:559px;color:rgba(0,0,0,0.88);letter-spacing:0.036px;left:166.3px;">bridge  host  ipvlan  macvlan  null  overlay</span>
<span id="t48" style="position:absolute;white-space:nowrap;font-size:14px;line-height:22px;top:598px;color:rgba(0,0,0,0.45);right:1751px;">系统时间</span>
<span id="t49" style="position:absolute;white-space:nowrap;font-size:14px;line-height:22px;top:598px;color:rgba(0,0,0,0.45);left:155px;">:</span>
<span id="t50" style="position:absolute;white-space:nowrap;font-size:14px;line-height:22px;top:598px;color:rgba(0,0,0,0.88);letter-spacing:-0.121px;left:166.3px;">2024/12/6 21:56:59</span>
<span id="t51" style="position:absolute;white-space:nowrap;font-size:28px;line-height:36px;top:226.6px;color:rgba(0,0,0,0.82);letter-spacing:-0.881px;left:1098.56px;transform:translateX(-50%);">0.42%</span>
<span id="t52" style="position:absolute;white-space:nowrap;font-size:28px;line-height:36px;top:226.6px;color:rgba(0,0,0,0.82);letter-spacing:-0.661px;left:1530.67px;transform:translateX(-50%);">20.33%</span>
<span id="t53" style="position:absolute;white-space:nowrap;font-size:14px;line-height:22px;top:327.8px;color:rgba(0,0,0,0.88);letter-spacing:-0.104px;left:1098.95px;transform:translateX(-50%);">Cpu: 0.01 / 2 核</span>
<span id="t54" style="position:absolute;white-space:nowrap;font-size:14px;line-height:22px;top:327.8px;color:rgba(0,0,0,0.88);letter-spacing:-0.321px;left:1530.84px;transform:translateX(-50%);">内存: 357.02MB / 1.72GB</span>
</div>
</body></html>
